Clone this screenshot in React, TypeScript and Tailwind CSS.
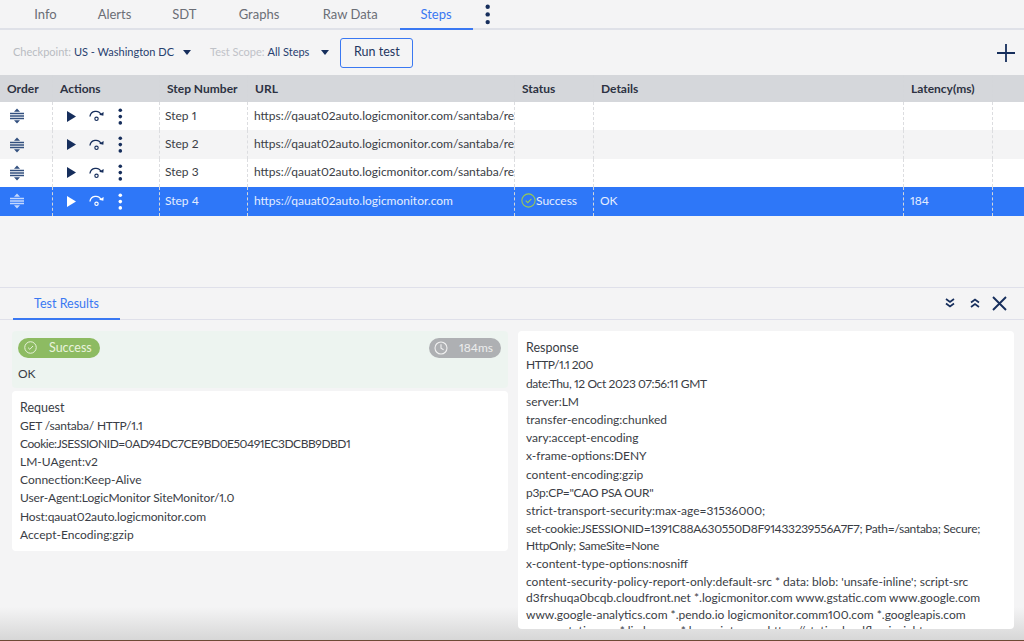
import React from "react";

const cols = "grid grid-cols-[53px_107px_88px_267px_79px_310px_89px_31px]";
const cell = "flex items-center min-w-0 overflow-hidden border-r border-dashed border-[#d4d6da] whitespace-nowrap";

function Caret({ className = "" }: { className?: string }) {
  return (
    <svg width="8" height="5" viewBox="0 0 8 5" className={className}>
      <path d="M0 0h8L4 5z" fill="#162e5c" />
    </svg>
  );
}

function OrderIcon({ color }: { color: string }) {
  return (
    <svg width="16" height="16" viewBox="0 0 16 16">
      <path d="M8 0.5l3 3.2H5zM8 15.5l-3-3.2h6z" fill={color} />
      <path d="M1 5.5h14M1 8h14M1 10.5h14" stroke={color} strokeWidth="1.4" />
    </svg>
  );
}

function PlayIcon({ color }: { color: string }) {
  return (
    <svg width="9" height="11" viewBox="0 0 9 11">
      <path d="M0 0l9 5.5L0 11z" fill={color} />
    </svg>
  );
}

function StepIcon({ color }: { color: string }) {
  return (
    <svg width="15" height="12" viewBox="0 0 16 12" fill="none">
      <path d="M1 6.5A6.3 6.3 0 0 1 13 4.8" stroke={color} strokeWidth="1.4" />
      <path d="M10.7 4.6l4.6 1.2.3-4.2z" fill={color} />
      <circle cx="8" cy="9" r="1.8" stroke={color} strokeWidth="1.2" />
    </svg>
  );
}

function Dots({ color, size = 3.6 }: { color: string; size?: number }) {
  const gap = size * 1.75;
  return (
    <svg width={size + 1} height={gap * 2 + size + 1} viewBox={`0 0 ${size + 1} ${gap * 2 + size + 1}`}>
      {[0, 1, 2].map((i) => (
        <circle key={i} cx={(size + 1) / 2} cy={(size + 1) / 2 + i * gap} r={size / 2} fill={color} />
      ))}
    </svg>
  );
}

function CheckCircle({ color, size }: { color: string; size: number }) {
  return (
    <svg width={size} height={size} viewBox="0 0 14 14" fill="none" className="shrink-0">
      <circle cx="7" cy="7" r="6.2" stroke={color} strokeWidth="1" />
      <path d="M4.4 7.2l1.9 1.8 3.4-3.6" stroke={color} strokeWidth="1" />
    </svg>
  );
}

function Row({ step, url, selected, alt }: { step: string; url: string; selected?: boolean; alt?: boolean }) {
  const icon = selected ? "#ffffff" : "#162e5c";
  const bg = selected ? "bg-[#2e77f8] text-[#e4edff]" : alt ? "bg-[#f4f4f5] text-[#3a3d45]" : "bg-white text-[#3a3d45]";
  const line = selected ? "border-[#a9c6fb]" : "border-[#dcdde0]";
  return (
    <div className={`${cols} h-[28.4px] text-[12px] leading-[16px] proportional-nums ${bg}`}>
      <div className={`${cell} ${line} pl-[9px]`}>
        <OrderIcon color={selected ? "#c4d8fd" : "#33507f"} />
      </div>
      <div className={`${cell} ${line} pl-[14px]`}>
        <PlayIcon color={icon} />
        <span className="ml-[13px] flex"><StepIcon color={icon} /></span>
        <span className="ml-[14px] flex"><Dots color={icon} /></span>
      </div>
      <div className={`${cell} ${line} pl-[5px] pb-[1px]`}>{step}</div>
      <div className={`${cell} ${line} pl-[6px] pb-[1px]`}>{url}</div>
      <div className={`${cell} ${line} pl-[6px] pb-[1px]`}>
        {selected && (
          <>
            <CheckCircle color="#9ccb4e" size={15} />
            <span>Success</span>
          </>
        )}
      </div>
      <div className={`${cell} ${line} pl-[6px] pb-[1px]`}>{selected ? "OK" : ""}</div>
      <div className={`${cell} ${line} pl-[6px] pb-[1px]`}>{selected ? "184" : ""}</div>
      <div />
    </div>
  );
}

const request: [string, string][] = [
  ["GET /santaba/ HTTP/1.1", "tracking-[-0.2px]"],
  ["Cookie:JSESSIONID=0AD94DC7CE9BD0E50491EC3DCBB9DBD1", "tracking-[-0.45px]"],
  ["LM-UAgent:v2", ""],
  ["Connection:Keep-Alive", ""],
  ["User-Agent:LogicMonitor SiteMonitor/1.0", "tracking-[-0.12px]"],
  ["Host:qauat02auto.logicmonitor.com", "tracking-[-0.12px]"],
  ["Accept-Encoding:gzip", ""],
];

const response: [string, string][] = [
  ["HTTP/1.1 200", "tracking-[-0.5px]"],
  ["date:Thu, 12 Oct 2023 07:56:11 GMT", "tracking-[-0.38px]"],
  ["server:LM", ""],
  ["transfer-encoding:chunked", ""],
  ["vary:accept-encoding", ""],
  ["x-frame-options:DENY", ""],
  ["content-encoding:gzip", ""],
  ['p3p:CP="CAO PSA OUR"', "tracking-[-0.3px]"],
  ["strict-transport-security:max-age=31536000;", ""],
  ["set-cookie:JSESSIONID=1391C88A630550D8F91433239556A7F7; Path=/santaba; Secure; HttpOnly; SameSite=None", "tracking-[-0.3px]"],
  ["x-content-type-options:nosniff", ""],
  ["content-security-policy-report-only:default-src * data: blob: 'unsafe-inline'; script-src d3frshuqa0bcqb.cloudfront.net *.logicmonitor.com www.gstatic.com www.google.com www.google-analytics.com *.pendo.io logicmonitor.comm100.com *.googleapis.com www.gstatic.com *.licdn.com *.hs-scripts.com https://static.cloudflareinsights.com", ""],
];

export default function App() {
  const tabs: [string, string][] = [
    ["Info", "w-[64px]"],
    ["Alerts", "w-[74px]"],
    ["SDT", "w-[65.5px]"],
    ["Graphs", "w-[84px]"],
    ["Raw Data", "w-[98.5px]"],
  ];
  return (
    <div className="relative h-[641px] w-[1024px] overflow-hidden bg-[#f4f4f5] font-['Lato',sans-serif] text-[#3a3d45]">
      {/* Top tabs */}
      <div className="flex h-[30px] border-b-2 border-[#dfe1e8] pl-[13.5px] text-[13px] text-[#6b6e76]">
        {tabs.map(([t, w]) => (
          <div key={t} className={`flex items-center justify-center pt-[1px] ${w}`}>
            {t}
          </div>
        ))}
        <div className="-mb-[2px] flex w-[73px] items-center justify-center border-b-2 border-[#3a78f2] pt-[1px] text-[#3a78f2]">
          Steps
        </div>
        <div className="ml-[12px] flex items-start pt-[4px]">
          <Dots color="#162e5c" size={4.4} />
        </div>
      </div>

      {/* Toolbar */}
      <div className="flex h-[45px] items-center pl-[13px] pr-[8px] text-[11px]">
        <span className="text-[#b9bcc2]">Checkpoint:</span>
        <span className="ml-[3px] text-[#27406f]">US - Washington DC</span>
        <Caret className="ml-[9px]" />
        <span className="ml-[19px] text-[#c0c2c8]">Test Scope:</span>
        <span className="ml-[3px] text-[#27406f]">All Steps</span>
        <Caret className="ml-[12px]" />
        <button className="ml-[11px] h-[30px] w-[73px] rounded-[3px] border border-[#3a78f2] text-[12.5px] text-[#1f3661]">
          Run test
        </button>
        <svg width="20" height="20" viewBox="0 0 20 20" className="ml-auto">
          <path d="M10 1v18M1 10h18" stroke="#162e5c" strokeWidth="1.8" />
        </svg>
      </div>

      {/* Table */}
      <div className={`${cols} h-[27px] bg-[#d5d7db] text-[12px] font-bold text-[#2d3242]`}>
        {["Order", "Actions", "Step Number", "URL", "Status", "Details", "Latency(ms)"].map((h) => (
          <div key={h} className={`${cell} border-[#bfc1c6] pl-[7px]`}>
            {h}
          </div>
        ))}
        <div />
      </div>
      <Row step="Step 1" url="https://qauat02auto.logicmonitor.com/santaba/rest/" />
      <Row step="Step 2" url="https://qauat02auto.logicmonitor.com/santaba/rest/" alt />
      <Row step="Step 3" url="https://qauat02auto.logicmonitor.com/santaba/rest/" />
      <Row step="Step 4" url="https://qauat02auto.logicmonitor.com" selected />

      {/* Test Results header */}
      <div className="mt-[71px] flex h-[33px] items-stretch border-y border-[#dfe0ea]">
        <div className="ml-[13px] -mb-px flex w-[107px] items-center justify-center border-b-2 border-[#3a78f2] pt-[3px] text-[12.5px] text-[#3a78f2]">
          Test Results
        </div>
        <div className="ml-auto flex items-center pr-[17px]">
          <svg width="10" height="10" viewBox="0 0 10 10" fill="none" stroke="#162e5c" strokeWidth="1.7">
            <path d="M1 1l4 3 4-3M1 5.5l4 3 4-3" />
          </svg>
          <svg width="10" height="10" viewBox="0 0 10 10" fill="none" stroke="#162e5c" strokeWidth="1.7" className="ml-[15px]">
            <path d="M1 4.5l4-3 4 3M1 9l4-3 4 3" />
          </svg>
          <svg width="15" height="15" viewBox="0 0 15 15" fill="none" stroke="#162e5c" strokeWidth="1.9" className="ml-[12px]">
            <path d="M1 1l13 13M14 1L1 14" />
          </svg>
        </div>
      </div>

      {/* Results */}
      <div className="flex items-start pl-[12px] pt-[11px] text-[12px] leading-[18.2px] text-[#3a3d45] proportional-nums">
        <div className="w-[496px]">
          <div className="h-[57px] rounded-[4px] bg-[#edf4f0] pl-[6px] pr-[7px] pt-[7px]">
            <div className="flex items-center justify-between">
              <div className="flex h-[20px] w-[82px] items-center rounded-full bg-[#8dbb62] pl-[6px] text-[12.5px] text-[#e9f3dd]">
                <CheckCircle color="#eef6e3" size={13} />
                <span className="ml-[12px] pt-[1px]">Success</span>
              </div>
              <div className="flex h-[20px] w-[72px] items-center rounded-full bg-[#aeb0b3] pl-[5px] text-[12px] text-[#eceded]">
                <svg width="14" height="14" viewBox="0 0 14 14" fill="none" stroke="#f0f0f0" strokeWidth="1.1" className="shrink-0">
                  <circle cx="7" cy="7" r="6" />
                  <path d="M7 3.2V7.3l2.6 1.5" />
                </svg>
                <span className="ml-[11px] pt-[1px]">184ms</span>
              </div>
            </div>
            <div className="mt-[7px] text-[12px]">OK</div>
          </div>
          <div className="mt-[3px] h-[160px] rounded-[4px] bg-white pl-[8px] pt-[8px]">
            <div className="text-[12.5px] leading-[18px]">Request</div>
            {request.map(([l, c]) => (
              <div key={l} className={c}>
                {l}
              </div>
            ))}
          </div>
        </div>
        <div className="relative z-10 ml-[10px] h-[298px] w-[496px] overflow-hidden rounded-[4px] bg-white pl-[8px] pr-[28px] pt-[8px]">
          <div className="text-[12.5px] leading-[18px]">Response</div>
          {response.map(([l, c]) => (
            <div key={l} className={`leading-[16.4px] py-[0.9px] ${c}`}>
              {l}
            </div>
          ))}
        </div>
      </div>

      {/* Window edge shading at the bottom of the screenshot */}
      <div className="pointer-events-none absolute inset-x-0 bottom-0 h-[34px] bg-gradient-to-b from-transparent to-[#d6d6d6]" />
      <div className="absolute inset-x-0 bottom-0 z-20 h-px bg-[#6e4a35]" />
    </div>
  );
}
